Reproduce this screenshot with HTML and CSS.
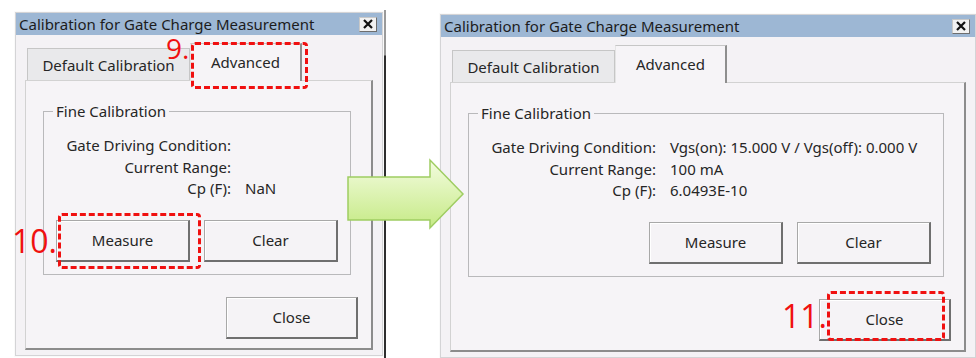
FILE: index.html
```html
<!DOCTYPE html>
<html lang="en">
<head>
    <meta charset="UTF-8">
    <meta name="viewport" content="width=device-width, initial-scale=1.0">
    <title>Calibration for Gate Charge Measurement</title>
    <link rel="stylesheet" href="styles.css">
</head>
<body>
    <div class="stage">
        <!-- before: Advanced tab opened, nothing measured yet -->
        <div class="dialog dialog-before">
            <div class="titlebar">
                <span class="title">Calibration for Gate Charge Measurement</span>
                <span class="close-x">
                    <svg width="10" height="10" viewBox="0 0 10 10"><path d="M1 1L9 9M9 1L1 9" stroke="#111" stroke-width="2.2"/></svg>
                </span>
            </div>
            <div class="tabs">
                <div class="tab">Default Calibration</div>
                <div class="tab active">Advanced</div>
            </div>
            <div class="panel">
                <fieldset class="group">
                    <legend>Fine Calibration</legend>
                    <div class="fields">
                        <span class="label">Gate Driving Condition:</span><span class="value"></span>
                        <span class="label">Current Range:</span><span class="value"></span>
                        <span class="label">Cp (F):</span><span class="value">NaN</span>
                    </div>
                    <div class="actions">
                        <button class="btn">Measure</button>
                        <button class="btn">Clear</button>
                    </div>
                </fieldset>
                <div class="footer">
                    <button class="btn">Close</button>
                </div>
            </div>
        </div>

        <div class="divider"></div>

        <!-- after: values filled in -->
        <div class="dialog dialog-after">
            <div class="titlebar">
                <span class="title">Calibration for Gate Charge Measurement</span>
                <span class="close-x">
                    <svg width="10" height="10" viewBox="0 0 10 10"><path d="M1 1L9 9M9 1L1 9" stroke="#111" stroke-width="2.2"/></svg>
                </span>
            </div>
            <div class="tabs">
                <div class="tab">Default Calibration</div>
                <div class="tab active">Advanced</div>
            </div>
            <div class="panel">
                <fieldset class="group">
                    <legend>Fine Calibration</legend>
                    <div class="fields">
                        <span class="label">Gate Driving Condition:</span><span class="value">Vgs(on): 15.000 V / Vgs(off): 0.000 V</span>
                        <span class="label">Current Range:</span><span class="value">100 mA</span>
                        <span class="label">Cp (F):</span><span class="value">6.0493E-10</span>
                    </div>
                    <div class="actions">
                        <button class="btn">Measure</button>
                        <button class="btn">Clear</button>
                    </div>
                </fieldset>
                <div class="footer">
                    <button class="btn">Close</button>
                </div>
            </div>
        </div>

        <svg class="arrow" width="122" height="74" viewBox="0 0 122 74">
            <defs>
                <linearGradient id="arrowFill" x1="0" y1="0" x2="0" y2="1">
                    <stop offset="0" stop-color="#f3fcdf"/>
                    <stop offset="1" stop-color="#c6ea86"/>
                </linearGradient>
            </defs>
            <path d="M2 20H84V3L117 37L84 71V63H2Z" fill="url(#arrowFill)" stroke="#9fcd62" stroke-width="1.5" stroke-linejoin="miter"/>
        </svg>

        <span class="step step-9">9.</span>
        <div class="callout callout-9"></div>
        <span class="step step-10">10.</span>
        <div class="callout callout-10"></div>
        <span class="step step-11">11.</span>
        <div class="callout callout-11"></div>
    </div>
</body>
</html>
```

FILE: styles.css
```css
html, body {
    margin: 0;
    background: #fff;
}
body {
    font-family: "Noto Sans", "Open Sans", sans-serif;
    font-size: 15px;
    color: #262626;
}
.stage {
    position: relative;
    display: flex;
    align-items: flex-start;
    height: 358px;
    padding: 12px 0 0 15px;
    box-sizing: border-box;
    overflow: hidden;
}

/* window */
.dialog {
    flex: none;
    box-sizing: border-box;
    background: #f4f2f5;
    border: 1px solid #d4d4d6;
    box-shadow: 0 0 0 1px #fafafa;
}
.dialog-before {
    width: 368px;
}
.dialog-after {
    width: 536px;
    margin-left: 54px;
    margin-top: 2px;
}
.titlebar {
    display: flex;
    align-items: center;
    justify-content: space-between;
    height: 22px;
    padding: 0 5px 0 3px;
    background: #9db7d4;
    color: #1c1c1c;
    font-size: 15px;
}
.close-x {
    display: flex;
    align-items: center;
    justify-content: center;
    width: 16px;
    height: 13px;
    background: #f2f2f2;
    border: 1px solid #c8c8c8;
    border-right-color: #6e6e6e;
    border-bottom-color: #6e6e6e;
}

/* tabs */
.tabs {
    display: flex;
    align-items: flex-end;
    height: 37px;
    margin-top: 8px;
    padding-left: 11px;
}
.tab {
    box-sizing: border-box;
    height: 32px;
    width: 163px;
    display: flex;
    align-items: center;
    justify-content: center;
    background: #e9e9eb;
    border: 1px solid #c6c6c6;
    border-bottom: none;
}
.tab.active {
    width: 112px;
    height: 38px;
    margin-bottom: -1px;
    padding-bottom: 1px;
    background: #f6f4f7;
    border-left-color: #e4e4e4;
    border-right: 2px solid #8e8e8e;
    position: relative;
}

/* tab page */
.panel {
    margin: 0 9px 5px;
    height: 270px;
    box-sizing: border-box;
    padding: 20px 13px 0 17px;
    background: #f6f4f7;
    border: 1px solid #d2d2d2;
    border-right: 2px solid #8c8c8c;
    border-bottom: 2px solid #8c8c8c;
}
.group {
    margin: 0 7px 0 0;
    padding: 14px 12px 12px 0;
    border: 1px solid #b9b9bb;
}
.group legend {
    margin-left: 9px;
    padding: 0 3px;
    line-height: 20px;
}
.fields {
    display: grid;
    grid-template-columns: 187px 1fr;
    column-gap: 14px;
    line-height: 21.5px;
}
.label {
    text-align: right;
}
.actions {
    display: flex;
    justify-content: flex-end;
    gap: 14px;
    margin-top: 20px;
}
.footer {
    display: flex;
    justify-content: flex-end;
    margin-top: 22px;
}
.btn {
    box-sizing: border-box;
    width: 134px;
    height: 42px;
    padding: 0;
    font: inherit;
    color: #262626;
    background: #f5f3f6;
    border: 1px solid #a8a8a8;
    border-right: 2px solid #6f6f6f;
    border-bottom: 2px solid #6f6f6f;
    box-shadow: inset 1px 1px #fff;
}
.footer .btn {
    width: 132px;
}

/* separator between the two screenshots */
.divider {
    flex: none;
    align-self: stretch;
    width: 2px;
    margin: -2px 0 0 1px;
    background: linear-gradient(#9a9a9a, #9a9a9a 45px, #2e2e2e 46px);
}

/* annotations */
.arrow {
    position: absolute;
    left: 346px;
    top: 157px;
}
.step {
    position: absolute;
    color: #f01010;
    font-family: "Open Sans", "Noto Sans", sans-serif;
    line-height: 0.7;
}
.step-9 {
    left: 166px;
    top: 39px;
    font-size: 28px;
}
.step-10 {
    left: 12px;
    top: 230px;
    font-size: 32px;
}
.step-11 {
    left: 782px;
    top: 305px;
    font-size: 32px;
}
.callout {
    position: absolute;
    box-sizing: border-box;
    border: 3px dashed #f01010;
    border-radius: 4px;
}
.callout-9 {
    left: 191px;
    top: 42px;
    width: 117px;
    height: 47px;
}
.callout-10 {
    left: 58px;
    top: 213px;
    width: 143px;
    height: 56px;
}
.callout-11 {
    left: 827px;
    top: 291px;
    width: 118px;
    height: 50px;
}
```
